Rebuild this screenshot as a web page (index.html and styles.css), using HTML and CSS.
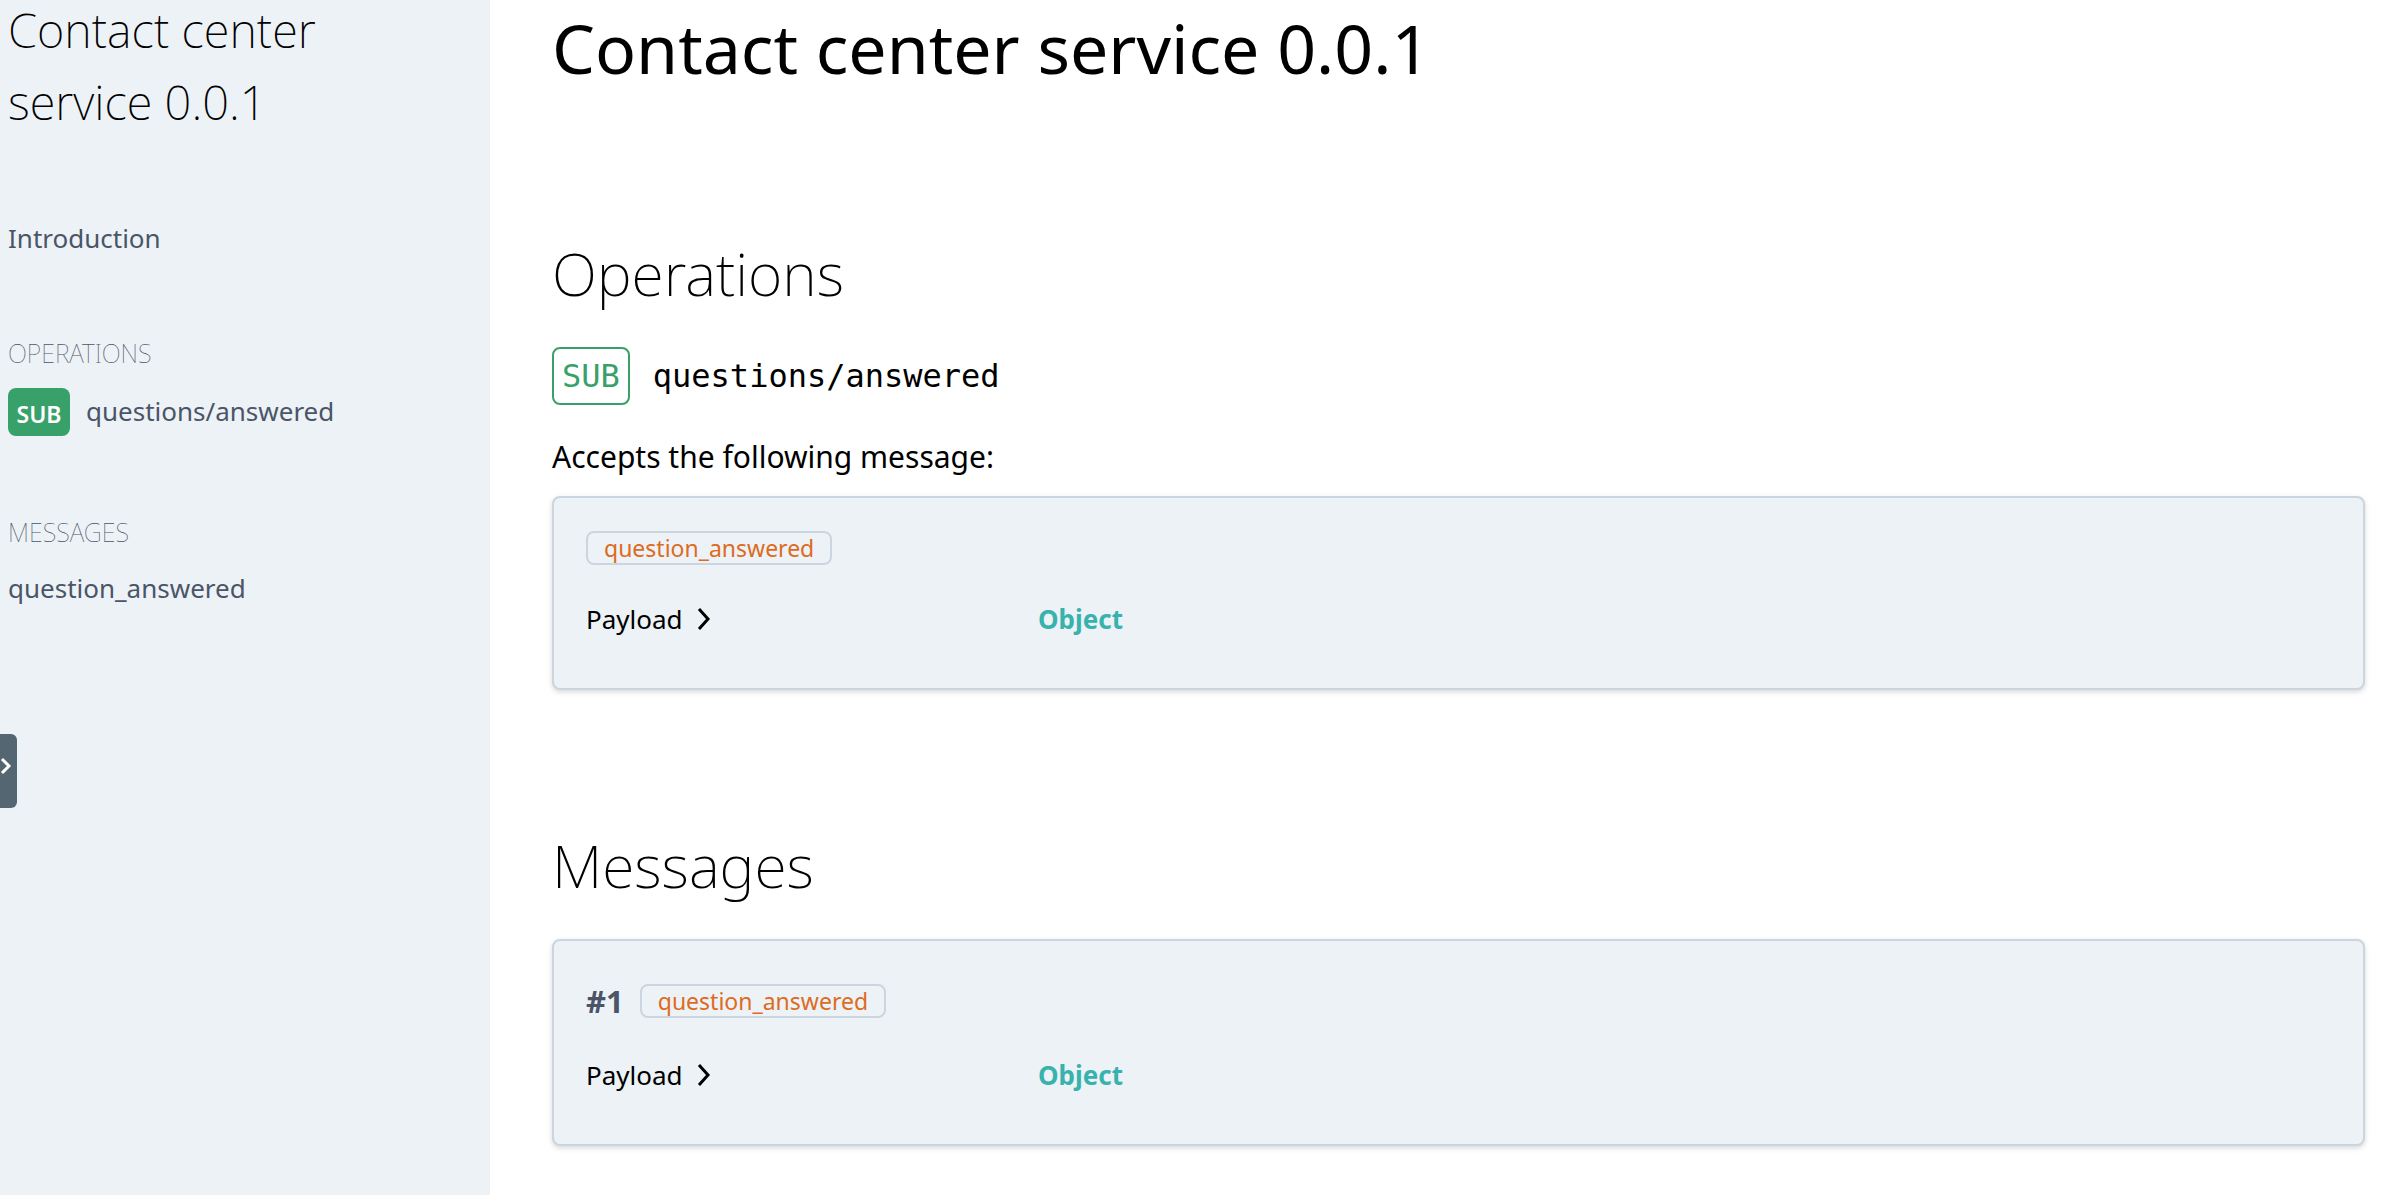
FILE: index.html
```html
<!DOCTYPE html>
<html lang="en">
<head>
<meta charset="utf-8">
<title>Contact center service 0.0.1</title>
<link rel="stylesheet" href="styles.css">
</head>
<body>
<div class="layout">
  <aside class="sidebar">
    <h2 class="sidebar-title">Contact center service 0.0.1</h2>
    <nav class="nav">
      <a class="nav-link" href="#introduction">Introduction</a>
      <section class="nav-group">
        <h3 class="nav-heading">Operations</h3>
        <a class="nav-link" href="#operations"><span class="badge">SUB</span><span>questions/answered</span></a>
      </section>
      <section class="nav-group">
        <h3 class="nav-heading">Messages</h3>
        <a class="nav-link" href="#messages">question_answered</a>
      </section>
    </nav>
  </aside>
  <main class="content">
    <h1 class="title" id="introduction">Contact center service 0.0.1</h1>
    <section class="section" id="operations">
      <h2 class="section-title">Operations</h2>
      <div class="operation"><span class="method">SUB</span><span>questions/answered</span></div>
      <p class="note">Accepts the following message:</p>
      <article class="card">
        <div class="card-head"><span class="chip">question_answered</span></div>
        <div class="row">
          <button class="toggle" type="button">Payload
            <svg class="chevron" viewBox="0 0 14 24" aria-hidden="true"><path d="M2 2l9 10-9 10"/></svg>
          </button>
          <span class="type">Object</span>
        </div>
      </article>
    </section>
    <section class="section" id="messages">
      <h2 class="section-title">Messages</h2>
      <article class="card">
        <div class="card-head numbered"><span class="number">#1</span><span class="chip">question_answered</span></div>
        <div class="row">
          <button class="toggle" type="button">Payload
            <svg class="chevron" viewBox="0 0 14 24" aria-hidden="true"><path d="M2 2l9 10-9 10"/></svg>
          </button>
          <span class="type">Object</span>
        </div>
      </article>
    </section>
  </main>
</div>
<button class="drawer" type="button" aria-label="Open panel">
  <svg viewBox="0 0 12 20" aria-hidden="true"><path d="M2 3l7 7-7 7"/></svg>
</button>
</body>
</html>
```
FILE: styles.css
```css
* { box-sizing: border-box; margin: 0; }
body { font-family: "Noto Sans", "Open Sans", sans-serif; color: #000; background: #fff; }
button { font: inherit; color: inherit; background: none; border: 0; padding: 0; }
.layout { display: flex; min-height: 100vh; }
.sidebar { flex: 0 0 490px; padding: 0 112px 0 8px; background: #edf2f7; border-right: 1px solid #f0f0f0; }
.sidebar-title { font-size: 47px; line-height: 72px; font-weight: 200; padding-bottom: 76px; margin-top: -6px; }
.nav { color: #4a5568; font-size: 26px; line-height: 48px; }
.nav-link { display: flex; align-items: center; gap: 16px; min-height: 48px; color: inherit; text-decoration: none; }
.nav-group { padding-top: 71px; }
.nav-group + .nav-group { padding-top: 76px; }
.nav-heading { font-size: 25px; line-height: 40px; margin-bottom: 12px; font-weight: 100; text-transform: uppercase; }
.badge { width: 62px; height: 48px; margin-top: 3px; border-radius: 8px; background: #38a169; color: #fff; font-size: 23px; line-height: 52px; font-weight: 600; text-align: center; }
.content { flex: 1; padding: 0 32px 48px 62px; }
.title { font-size: 68px; line-height: 96px; font-weight: 400; padding-bottom: 2px; }
.section { padding-top: 127px; }
.section-title { font-size: 59px; line-height: 96px; font-weight: 200; margin-bottom: 26px; }
.operation { display: flex; align-items: center; gap: 23px; font: 32px/54px "DejaVu Sans Mono", monospace; }
.method { border: 2px solid #38a169; border-radius: 8px; padding: 0 8px; color: #38a169; }
.note { font-size: 30px; line-height: 48px; margin: 28px 0 15px; }
.card { background: #edf2f7; border: 2px solid #cbd5e0; border-radius: 8px; padding: 33px 32px 45px; box-shadow: 0 2px 6px rgba(0, 0, 0, .1), 0 2px 4px rgba(0, 0, 0, .06); }
.card-head { display: flex; align-items: center; gap: 16px; }
.numbered { min-height: 54px; }
.chip { border: 2px solid #cbd5e0; border-radius: 8px; padding: 0 16px; color: #dd6b20; font-size: 23px; line-height: 30px; }
.number { font-size: 31px; line-height: 48px; font-weight: 700; color: #4a5568; }
.row { display: flex; align-items: center; margin-top: 30px; line-height: 48px; }
.numbered + .row { margin-top: 23px; }
.toggle { display: flex; align-items: center; gap: 14px; flex: 0 0 452px; font-size: 26px; text-align: left; }
.chevron { width: 14px; height: 24px; fill: none; stroke: #000; stroke-width: 3; }
.type { font-size: 26px; font-weight: 700; color: #38b2ac; }
.drawer { position: fixed; left: 0; top: 734px; width: 17px; height: 74px; padding-bottom: 10px; border-radius: 0 6px 6px 0; background: #546671; display: flex; align-items: center; }
.drawer svg { width: 12px; height: 20px; fill: none; stroke: #fff; stroke-width: 3; }
```
